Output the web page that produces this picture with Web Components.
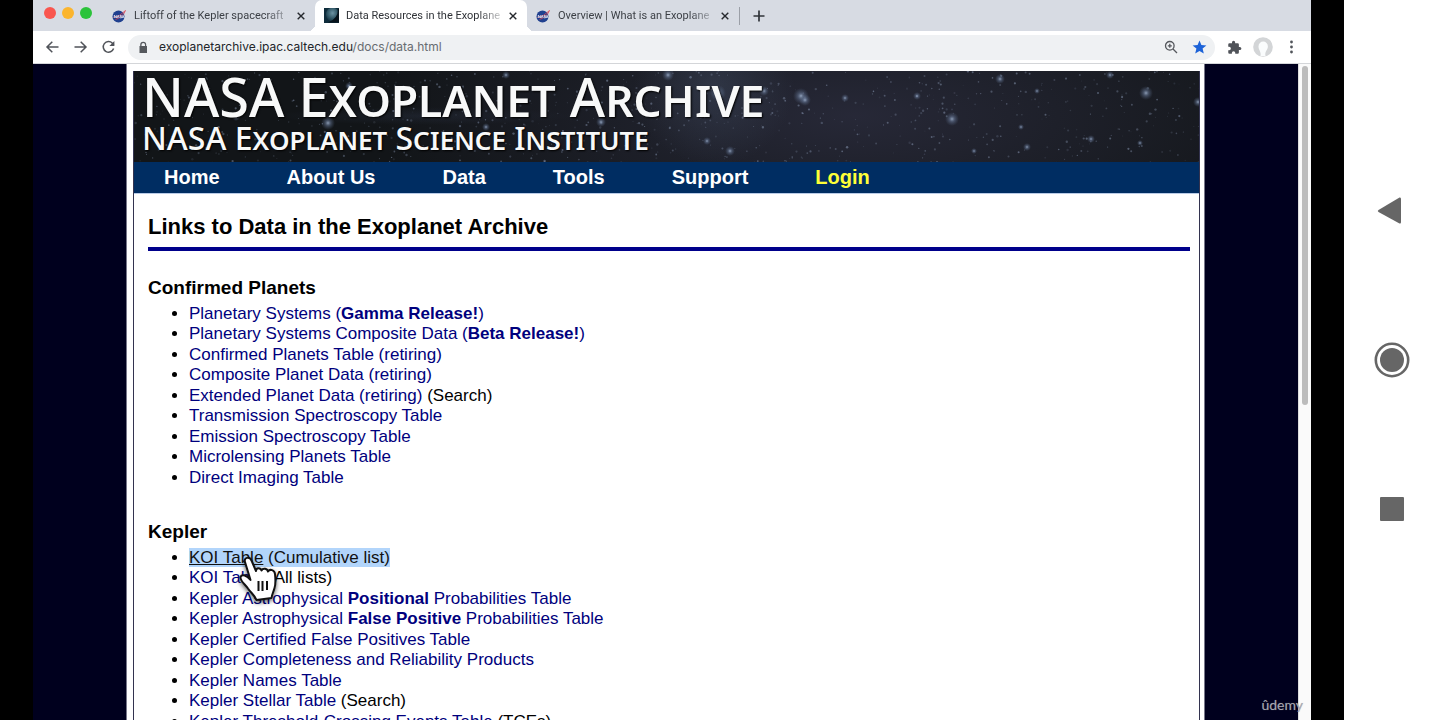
<!DOCTYPE html>
<html lang="en">
<head>
<meta charset="utf-8">
<title>Data Resources in the Exoplanet Archive</title>
<style>
  html, body { margin: 0; height: 100%; overflow: hidden; background: #fff; }
  body { font-family: "Liberation Sans", Arial, sans-serif; }
</style>
</head>
<body>
<recorded-screen></recorded-screen>

<template id="t-screen">
  <style>
    :host { display: grid; grid-template-columns: minmax(0, 1fr) 96px; height: 100vh; }
    main { position: relative; display: flex; background: #000; padding: 0 33px; min-width: 0; min-height: 0; }
    browser-window { flex: 1; min-width: 0; }
    .mark { position: absolute; right: 41px; bottom: 5px; font: 14px/20px Lato, sans-serif; color: #a6a6b0; text-shadow: 0 0 1px #8888; }
  </style>
  <main>
    <browser-window></browser-window>
    <span class="mark">ûdemy</span>
  </main>
  <device-nav></device-nav>
</template>

<template id="t-device">
  <style>
    :host { display: flex; flex-direction: column; align-items: center; justify-content: center; background: #fff; }
    button { display: flex; align-items: center; justify-content: center; width: 48px; height: 149px; padding: 0; border: 0; background: none; }
    svg { fill: #666; }
  </style>
  <button aria-label="Back"><svg width="36" height="36"><path d="M4.500 17 25.500 4.600Q27 4 27 6V29Q27 31 25.500 30.400L4.500 19Q3 18 4.500 17Z"/></svg></button>
  <button aria-label="Home"><svg width="36" height="36"><circle cx="18" cy="18" r="16.200" fill="none" stroke="#666" stroke-width="2.600"/><circle cx="18" cy="18" r="12"/></svg></button>
  <button aria-label="Recent apps"><svg width="36" height="36"><rect x="6" y="6" width="24" height="24" rx="1"/></svg></button>
</template>

<template id="t-window">
  <style>
    :host { display: flex; flex-direction: column; min-height: 0; background: #fff; }
    header { display: flex; align-items: center; height: 31px; background: #d7dbe3; }
    .lights { display: flex; align-items: center; gap: 6px; width: 70px; height: 31px; padding-left: 11px; box-sizing: border-box; }
    .lights button { width: 12px; height: 12px; margin-bottom: 6px; padding: 0; border: 0; border-radius: 50%; background: var(--c); }
    .new { display: flex; margin-left: 7px; padding: 6px; border: 0; background: none; }
    .sep { width: 1px; height: 18px; background: #9b9fa7; }
    .view { display: flex; flex: 1; min-height: 0; overflow: hidden; }
    archive-page { flex: 1; min-width: 0; }
    .bar { width: 13px; box-sizing: border-box; padding: 2px 3px; background: #fafafa; border-left: 1px solid #ddd; }
    .thumb { height: 52%; border-radius: 4px; background: #bcbcbc; }
  </style>
  <header>
    <div class="lights">
      <button style="--c:#f9564f" aria-label="Close window"></button>
      <button style="--c:#fbb52e" aria-label="Minimize"></button>
      <button style="--c:#2bc33b" aria-label="Zoom"></button>
    </div>
    <browser-tab icon="nasa">Liftoff of the Kepler spacecraft</browser-tab>
    <browser-tab icon="planet" active>Data Resources in the Exoplane</browser-tab>
    <browser-tab icon="nasa">Overview | What is an Exoplane</browser-tab>
    <span class="sep"></span>
    <button class="new" aria-label="New tab"><svg width="12" height="12" stroke="#30343a" stroke-width="1.700"><path d="M6 .5V11.500M.5 6H11.500"/></svg></button>
  </header>
  <browser-toolbar></browser-toolbar>
  <div class="view">
    <archive-page></archive-page>
    <div class="bar"><div class="thumb"></div></div>
  </div>
</template>

<template id="t-tab">
  <style>
    :host { position: relative; display: flex; align-items: center; box-sizing: border-box; width: 212px; height: 31px; padding: 0 8px 0 9px; font: 11px/16px Roboto, sans-serif; color: #3b3f45; }
    :host([active]) { background: #fff; border-radius: 7px 7px 0 0; color: #303338; }
    :host([active])::before, :host([active])::after { content: ""; position: absolute; bottom: 0; width: 7px; height: 7px; }
    :host([active])::before { right: 100%; background: radial-gradient(circle at 0 0, #0000 7px, #fff 7px); }
    :host([active])::after { left: 100%; background: radial-gradient(circle at 100% 0, #0000 7px, #fff 7px); }
    .label { flex: 1; min-width: 0; margin: 0 4px 0 6px; overflow: hidden; white-space: nowrap; -webkit-mask-image: linear-gradient(90deg, #000 84%, #0002); mask-image: linear-gradient(90deg, #000 84%, #0002); }
    button { display: flex; padding: 2px; border: 0; background: none; }
    .icon { display: flex; width: 16px; }
  </style>
  <span class="icon"></span>
  <span class="label"><slot></slot></span>
  <button aria-label="Close tab"><svg width="8" height="8" stroke="#25282d" stroke-width="1.400"><path d="M.7.7 7.300 7.300M7.300.7.7 7.300"/></svg></button>
</template>

<template id="t-toolbar">
  <style>
    :host { display: flex; align-items: center; box-sizing: border-box; height: 33px; padding: 0 12px; background: #fff; border-bottom: 1px solid #d4d6d9; }
    button { display: flex; padding: 0; border: 0; background: none; }
    nav { display: flex; gap: 13px; margin-right: 12px; }
    form { display: flex; align-items: center; flex: 1; height: 25px; padding: 0 8px; border-radius: 13px; background: #eff1f3; }
    label { position: relative; flex: 1; margin-left: 8px; font: 12px/24px Inter, sans-serif; color: #686c71; }
    input { display: block; width: 100%; height: 24px; padding: 0; border: 0; background: none; font: inherit; color: transparent; }
    .url { position: absolute; inset: 0; pointer-events: none; }
    .url b { font-weight: 400; color: #222529; }
    .right { display: flex; gap: 14px; }
    .tools { display: flex; align-items: center; gap: 11px; margin-left: 12px; }
  </style>
  <nav>
    <button aria-label="Back"><svg width="15" height="14" fill="none" stroke="#505359" stroke-width="1.500"><path d="M13.500 7H2.200M7.300 1.700 2 7l5.300 5.300"/></svg></button>
    <button aria-label="Forward"><svg width="15" height="14" fill="none" stroke="#505359" stroke-width="1.500"><path d="M1.500 7H12.800M7.700 1.700 13 7l-5.300 5.300"/></svg></button>
    <button aria-label="Reload"><svg width="15" height="14" fill="none" stroke="#505359" stroke-width="1.500"><path d="M12.600 8.500A5.300 5.300 0 1 1 11.400 3.200L12.800 4.700"/><path d="M13.400 1V6H8.400Z" fill="#505359" stroke="none"/></svg></button>
  </nav>
  <form>
    <svg width="15" height="13" fill="#55585d"><path d="M3.500 5H4.200V3.800a3 3 0 0 1 6 0V5H11V12H3.500ZM5.500 5H9V3.800a1.750 1.750 0 0 0-3.500 0Z" fill-rule="evenodd"/></svg>
    <label><input aria-label="Address"><span class="url"><b>exoplanetarchive.ipac.caltech.edu</b>/docs/data.html</span></label>
    <span class="right">
      <button type="button" aria-label="Zoom"><svg width="14" height="14" fill="none" stroke="#55585d" stroke-width="1.300"><circle cx="5.800" cy="5.800" r="4.300"/><path d="M9 9l4 4M5.800 3.800v4M3.800 5.800h4"/></svg></button>
      <button type="button" aria-label="Bookmark"><svg width="15" height="14" fill="#1d63d8"><path d="M7.500.4 9.400 5 14.400 5.400 10.600 8.600 11.800 13.500 7.500 10.900 3.200 13.500 4.400 8.600.6 5.400 5.600 5Z"/></svg></button>
    </span>
  </form>
  <div class="tools">
    <button aria-label="Extensions"><svg width="15" height="15" viewBox="0 0 24 24" fill="#505359"><path d="M20.500 11H19V7a2 2 0 0 0-2-2h-4V3.500a2.500 2.500 0 0 0-5 0V5H4a2 2 0 0 0-2 2v3.800h1.500a2.700 2.700 0 0 1 0 5.400H2V20a2 2 0 0 0 2 2h3.800v-1.500a2.700 2.700 0 0 1 5.400 0V22H17a2 2 0 0 0 2-2v-4h1.500a2.500 2.500 0 0 0 0-5Z"/></svg></button>
    <button aria-label="Profile"><svg width="20" height="20"><circle cx="10" cy="10" r="9.800" fill="#d3d5d7"/><path d="M7.500 19C8.500 15 5.500 13 5.500 9.500a4.700 5 0 0 1 9.400 0C14.900 13 11.500 14 12.500 19Z" fill="#fafcfd"/></svg></button>
    <button aria-label="Menu"><svg width="15" height="14" fill="#505359"><circle cx="7.500" cy="2" r="1.400"/><circle cx="7.500" cy="7" r="1.400"/><circle cx="7.500" cy="12" r="1.400"/></svg></button>
  </div>
</template>

<template id="t-banner">
  <style>
    :host { position: relative; display: block; box-sizing: border-box; height: 91px; padding: 0 8px; overflow: hidden; color: #f8f9f9;
      background: radial-gradient(circle at 580px 15px, #46536a66, #0000 80px), radial-gradient(ellipse 480px 160px at 720px 45px, #2c2d3fcc, #0000), radial-gradient(ellipse at 290px 45px, #242b3988, #0000 150px), #121518; }
    .sky { position: absolute; inset: 0; width: 100%; height: 100%; }
    h1, p { position: relative; margin: 0; font-family: "Noto Sans", sans-serif; font-variant-caps: small-caps; font-weight: 500; white-space: nowrap; text-shadow: 1px 1px 2px #000; }
    h1 { font-size: 54px; line-height: 50px; }
    p { font-size: 32px; line-height: 34px; }
  </style>
  <svg class="sky" aria-hidden="true"></svg>
  <h1>NASA Exoplanet Archive</h1>
  <p>NASA Exoplanet Science Institute</p>
</template>

<template id="t-menu">
  <style>
    :host { display: flex; align-items: center; gap: 67px; height: 31px; padding: 0 30px; background: #002d62; border-bottom: 1px solid #b9cbe6; font-weight: 700; font-size: 20px; line-height: 31px; }
  </style>
  <slot></slot>
</template>

<template id="t-section">
  <style>
    :host { display: block; }
    h3 { margin: 0 0 4px; font-size: 19px; line-height: 24px; }
  </style>
  <h3></h3>
  <slot></slot>
</template>

<template id="t-page">
  <style>
    :host { display: block; padding: 0 93px; background: #00001e; color: #000; overflow: hidden; }
    .sheet { padding: 7px 4px 0 6px; background: #fff; border: 1px solid #77778a; border-width: 0 1px; }
    .frame { border: 1px solid #33334f; border-width: 0 1px; }
    article { padding: 20px 9px 0 14px; }
    h2 { margin: 0; padding-bottom: 7px; border-bottom: 4px solid #00008b; font-size: 22px; line-height: 26px; }
    data-section { margin-top: 25px; }
    data-section + data-section { margin-top: 32px; }
    ul { display: grid; grid-auto-rows: 1fr; height: 184px; margin: 0; padding-left: 41px; font-size: 17px; line-height: 20px; }
    a { color: #00007d; text-decoration: none; }
    site-menu a { color: #fff; }
    site-menu a.login { color: #ffff37; }
    mark { background: #b2d5fb; color: #111; }
    mark a { color: #111; text-decoration: underline; }
    .target { position: relative; width: max-content; }
    .hand { position: absolute; left: 50px; top: 8px; z-index: 1; filter: drop-shadow(0 2px 2px #0009); }
  </style>
  <div class="sheet"><div class="frame">
    <site-banner></site-banner>
    <site-menu>
      <a href="#">Home</a><a href="#">About Us</a><a href="#">Data</a><a href="#">Tools</a><a href="#">Support</a><a href="#" class="login">Login</a>
    </site-menu>
    <article>
      <h2>Links to Data in the Exoplanet Archive</h2>
      <data-section heading="Confirmed Planets">
        <ul>
          <li><a href="#">Planetary Systems (<b>Gamma Release!</b>)</a></li>
          <li><a href="#">Planetary Systems Composite Data (<b>Beta Release!</b>)</a></li>
          <li><a href="#">Confirmed Planets Table (retiring)</a></li>
          <li><a href="#">Composite Planet Data (retiring)</a></li>
          <li><a href="#">Extended Planet Data (retiring)</a> (Search)</li>
          <li><a href="#">Transmission Spectroscopy Table</a></li>
          <li><a href="#">Emission Spectroscopy Table</a></li>
          <li><a href="#">Microlensing Planets Table</a></li>
          <li><a href="#">Direct Imaging Table</a></li>
        </ul>
      </data-section>
      <data-section heading="Kepler">
        <ul>
          <li class="target"><mark><a href="#">KOI Table</a> (Cumulative list)</mark>
            <svg class="hand" width="38" height="50" viewBox="0 0 38 50" fill="#fff" stroke="#111" stroke-width="2" stroke-linejoin="round"><path d="M6 6C4.500 1.500 10.500 0 12.500 4.500L17 15C17 11.500 21.500 11.500 22.500 14.500C24 11.500 28.500 12.500 29 15.500C31 12.500 35.500 14 36 18C36.500 23 37 28 35.500 32C34.500 36 33 38 32.500 42L17.500 44C15.500 39 12 37 9 32.500C6.500 28.500 1 25 1.500 21C3 17.500 8 19.500 11.500 24Z"/><path d="M19.500 25V35M23.500 25V35M28 25V34" fill="none"/></svg>
          </li>
          <li><a href="#">KOI Table</a> (All lists)</li>
          <li><a href="#">Kepler Astrophysical <b>Positional</b> Probabilities Table</a></li>
          <li><a href="#">Kepler Astrophysical <b>False Positive</b> Probabilities Table</a></li>
          <li><a href="#">Kepler Certified False Positives Table</a></li>
          <li><a href="#">Kepler Completeness and Reliability Products</a></li>
          <li><a href="#">Kepler Names Table</a></li>
          <li><a href="#">Kepler Stellar Table</a> (Search)</li>
          <li><a href="#">Kepler Threshold-Crossing Events Table</a> (TCEs)</li>
        </ul>
      </data-section>
    </article>
  </div></div>
</template>

<script>
  class TemplateElement extends HTMLElement {
    constructor() {
      super();
      const t = document.getElementById(this.constructor.template);
      this.attachShadow({ mode: 'open' }).append(t.content.cloneNode(true));
    }
  }
  const define = (name, template, base = TemplateElement) =>
    customElements.define(name, class extends base { static template = template; });

  const TAB_ICONS = {
    nasa: '<svg width="15" height="14"><circle cx="6.500" cy="7.500" r="6" fill="#20408f"/><path d="M1.500 8.500Q7 8 13.500 1.500Q11 8 3.500 10.500" fill="none" stroke="#e04452" stroke-width=".8"/><path d="M2.300 9V6.200L4.300 9V6.200M5.100 9 6.200 6.300 7.200 9M9.500 6.500H8.200V7.600H9.500V8.800H8M10.300 9l.8-2.600.8 2.600" fill="none" stroke="#e8ecf6" stroke-width=".8"/></svg>',
    planet: '<svg width="15" height="15"><defs><radialGradient id="g" cx=".5" cy=".4" r=".7"><stop offset="0" stop-color="#6c93a3"/><stop offset=".6" stop-color="#2b5160"/><stop offset="1" stop-color="#0c2230"/></radialGradient></defs><path d="M0 0H15V15H0Z" fill="#0e2c3b"/><ellipse cx="8.500" cy="6.500" rx="6.500" ry="7" fill="url(#g)"/><path d="M14 1Q14 11 4 14.500H15V1Z" fill="#07131b"/></svg>'
  };

  class Tab extends TemplateElement {
    connectedCallback() {
      this.shadowRoot.querySelector('.icon').innerHTML = TAB_ICONS[this.getAttribute('icon')];
    }
  }

  class Toolbar extends TemplateElement {
    connectedCallback() {
      this.shadowRoot.querySelector('form').addEventListener('submit', e => e.preventDefault());
    }
  }

  // Scatters a repeatable field of faint stars plus a few bright ones.
  class Banner extends TemplateElement {
    connectedCallback() {
      let seed = 77;
      const rnd = () => (seed = (seed * 16807) % 2147483647) / 2147483647;
      let out = '<defs><radialGradient id="s"><stop offset="0" stop-color="#a9bcd8" stop-opacity=".8"/><stop offset=".4" stop-color="#6a7c9c" stop-opacity=".5"/><stop offset="1" stop-color="#50607c" stop-opacity="0"/></radialGradient></defs>';
      for (let i = 0; i < 850; i++)
        out += `<circle cx="${(rnd() * 1066).toFixed(1)}" cy="${(rnd() * 92).toFixed(1)}" r="${(0.4 + rnd() * 0.8).toFixed(1)}" fill="#8391ab" opacity="${(0.12 + rnd() * 0.45).toFixed(2)}"/>`;
      const bright = [[194,52,7],[102,46,4],[215,15,4],[372,4,4],[534,4,6],[630,20,5],[667,25,8],[671,29,6],[584,22,8],[573,70,4],[596,80,5],[711,27,4],[783,25,4],[818,48,7],[866,8,5],[887,56,3],[893,76,4],[957,68,4],[1012,22,7],[1064,31,5],[976,4,4],[467,51,5],[352,56,4],[840,80,3],[903,20,3],[1006,72,3]];
      for (const [x, y, r] of bright) out += `<circle cx="${x}" cy="${y}" r="${r}" fill="url(#s)"/>`;
      this.shadowRoot.querySelector('.sky').innerHTML = out;
    }
  }

  class Section extends TemplateElement {
    connectedCallback() {
      this.shadowRoot.querySelector('h3').textContent = this.getAttribute('heading');
    }
  }

  define('browser-tab', 't-tab', Tab);
  define('browser-toolbar', 't-toolbar', Toolbar);
  define('site-banner', 't-banner', Banner);
  define('site-menu', 't-menu');
  define('data-section', 't-section', Section);
  define('archive-page', 't-page');
  define('browser-window', 't-window');
  define('device-nav', 't-device');
  define('recorded-screen', 't-screen');
</script>
</body>
</html>
